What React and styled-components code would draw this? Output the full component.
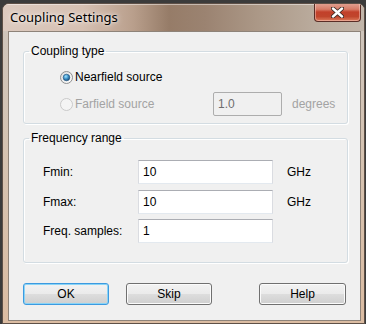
import styled, { createGlobalStyle } from 'styled-components';

const GlobalStyle = createGlobalStyle`
html, body {
    margin: 0;
    padding: 0;
    background: #3b3b3b;
    width: 366px;
    height: 324px;
    overflow: hidden;
}
* { box-sizing: border-box; }
`;

const RadioIcon = ({ checked, disabled }) => (
    <svg width="13" height="13" viewBox="0 0 13 13">
        <defs>
            <linearGradient id="rfill" x1="0" y1="0" x2="1" y2="1">
                <stop offset="0" stopColor="#dcdcdc" />
                <stop offset="1" stopColor="#ffffff" />
            </linearGradient>
            <radialGradient id="rdot" cx="0.4" cy="0.35" r="0.7">
                <stop offset="0" stopColor="#9fe4ff" />
                <stop offset="0.5" stopColor="#3f92c8" />
                <stop offset="1" stopColor="#14446e" />
            </radialGradient>
        </defs>
        <circle cx="6.5" cy="6.5" r="6" fill={disabled ? '#f4f4f4' : 'url(#rfill)'} stroke={disabled ? '#c9c9c9' : '#8e8f8f'} />
        {checked && <circle cx="6.5" cy="6.5" r="3.3" fill="url(#rdot)" stroke="#1d4f7a" strokeWidth="0.6" />}
    </svg>
);

const CloseGlyph = () => (
    <svg width="13" height="11" viewBox="0 0 13 11">
        <path d="M2 1.5 L11 9.5 M11 1.5 L2 9.5" stroke="#3d2a25" strokeWidth="4.2" strokeLinecap="round" />
        <path d="M2 1.5 L11 9.5 M11 1.5 L2 9.5" stroke="#ffffff" strokeWidth="2.4" strokeLinecap="round" />
    </svg>
);

const App = () => {
    return (
        <>
            <GlobalStyle />
            <Desktop>
                <Window>
                    <TitleBar>
                        <Title>Coupling Settings</Title>
                        <CloseButton><CloseGlyph /></CloseButton>
                    </TitleBar>
                    <Frame>
                        <Client>
                            <Group>
                                <Legend>Coupling type</Legend>
                                <GroupBody $pad="7px 0 7px 36px">
                                    <Row>
                                        <Choice>
                                            <RadioIcon checked />
                                            <ChoiceText>Nearfield source</ChoiceText>
                                        </Choice>
                                    </Row>
                                    <Row $mt="3px">
                                        <Choice $disabled>
                                            <RadioIcon disabled />
                                            <ChoiceText>Farfield source</ChoiceText>
                                        </Choice>
                                        <Field $width="69px" disabled value="1.0" readOnly />
                                        <Unit $gap="10px" $disabled>degrees</Unit>
                                    </Row>
                                </GroupBody>
                            </Group>
                            <Group $top="7px">
                                <Legend>Frequency range</Legend>
                                <GroupBody $pad="15px 0 19px 19px">
                                    <Row>
                                        <FieldLabel>Fmin:</FieldLabel>
                                        <Field $width="135px" defaultValue="10" />
                                        <Unit $gap="14px">GHz</Unit>
                                    </Row>
                                    <Row $mt="6px">
                                        <FieldLabel>Fmax:</FieldLabel>
                                        <Field $width="135px" defaultValue="10" />
                                        <Unit $gap="14px">GHz</Unit>
                                    </Row>
                                    <Row $mt="5px">
                                        <FieldLabel>Freq. samples:</FieldLabel>
                                        <Field $width="135px" defaultValue="1" />
                                    </Row>
                                </GroupBody>
                            </Group>
                            <ButtonRow>
                                <Button $default>OK</Button>
                                <Button>Skip</Button>
                                <Button $push $width="87px">Help</Button>
                            </ButtonRow>
                        </Client>
                    </Frame>
                </Window>
            </Desktop>
        </>
    );
};

const Desktop = styled.div`
padding: 3px 1px 0 2px;
height: 324px;
`;

const Window = styled.div`
width: 363px;
height: 321px;
border: 1px solid #5e5047;
border-radius: 7px 7px 0 0;
overflow: hidden;
display: flex;
flex-direction: column;
background: #d6bfab;
box-shadow: inset 0 1px 0 rgba(255,255,255,0.5);
`;

const TitleBar = styled.div`
height: 27px;
flex: none;
display: flex;
justify-content: space-between;
align-items: flex-start;
background: linear-gradient(90deg, #dccabf 0%, #d6c0b2 22%, #b99f8c 36%, #967c68 46%, #9b8371 56%, #ad9a89 72%, #bbad9f 88%, #c2b6aa 100%);
box-shadow: inset 0 1px 0 rgba(255,255,255,0.45);
`;

const Title = styled.div`
font-family: "Noto Sans", "Open Sans", sans-serif;
font-size: 13px;
line-height: 17px;
color: #000;
padding: 5px 0 0 7px;
text-shadow: 0 0 6px rgba(255,255,255,0.9), 0 0 3px rgba(255,255,255,0.7);
`;

const CloseButton = styled.div`
width: 47px;
height: 19px;
margin: -1px 3px 0 0;
border: 1px solid #5a2d26;
border-top: none;
border-radius: 0 0 4px 4px;
display: flex;
align-items: center;
justify-content: center;
background: linear-gradient(180deg, #e3a596 0%, #d77b66 35%, #c2402a 50%, #c0452c 75%, #dc7a5a 100%);
box-shadow: inset 0 0 0 1px rgba(255,220,210,0.45);
`;

const Frame = styled.div`
flex: 1;
display: flex;
padding: 0 3px 2px 5px;
background: linear-gradient(180deg, #cfc5bb 0%, #d5c3b2 40%, #dbbca2 100%);
`;

const Client = styled.div`
flex: 1;
display: flex;
flex-direction: column;
border: 1px solid #8e8379;
background: #f0f0f0;
padding: 12px 12px 0 14px;
font-family: "Liberation Sans", Arial, sans-serif;
font-size: 12px;
color: #000;
`;

const Group = styled.fieldset`
margin: ${p => p.$top || '0'} 0 0 0;
padding: 0;
min-width: 0;
border: 1px solid #d3dce2;
border-radius: 3px;
box-shadow: inset 1px 1px 0 #fff, 1px 1px 0 #fff;
`;

const Legend = styled.legend`
margin-left: 5px;
padding: 0 2px;
line-height: 14px;
font-size: 12px;
color: #000;
`;

const GroupBody = styled.div`
display: flex;
flex-direction: column;
padding: ${p => p.$pad};
`;

const Row = styled.div`
display: flex;
align-items: center;
height: 24px;
margin-top: ${p => p.$mt || '0'};
`;

const Choice = styled.label`
width: 153px;
display: flex;
align-items: center;
gap: 2px;
color: ${p => p.$disabled ? '#a3a3a3' : '#000'};
svg { flex: none; }
`;

const ChoiceText = styled.span`
line-height: 14px;
`;

const FieldLabel = styled.span`
width: 95px;
line-height: 14px;
`;

const Field = styled.input`
width: ${p => p.$width};
height: 24px;
margin: 0;
padding: 0 0 0 4px;
font-family: "Liberation Sans", Arial, sans-serif;
font-size: 12px;
color: #000;
background: #fff;
border: 1px solid #dadce1;
border-top-color: #abadb3;
border-bottom-color: #e3e9ef;
border-radius: 0;
outline: none;
&:disabled {
    background: #f0f0f0;
    color: #6d6d6d;
    border-color: #adadad;
    border-radius: 2px;
}
`;

const Unit = styled.span`
margin-left: ${p => p.$gap};
color: ${p => p.$disabled ? '#a3a3a3' : '#000'};
line-height: 14px;
`;

const ButtonRow = styled.div`
display: flex;
gap: 17px;
margin-top: 20px;
padding-right: 2px;
`;

const Button = styled.button`
width: ${p => p.$width || '86px'};
height: 22px;
margin: 0 0 0 ${p => p.$push ? 'auto' : '0'};
padding: 0;
font-family: "Liberation Sans", Arial, sans-serif;
font-size: 12px;
color: #000;
border: 1px solid ${p => p.$default ? '#3c9ae0' : '#707070'};
border-radius: 3px;
background: linear-gradient(180deg, #f2f2f2 0%, #ebebeb 48%, #dddddd 52%, #cfcfcf 100%);
box-shadow: inset 0 0 0 1px ${p => p.$default ? '#8ad4f6' : '#fbfbfb'};
`;

export default App;
